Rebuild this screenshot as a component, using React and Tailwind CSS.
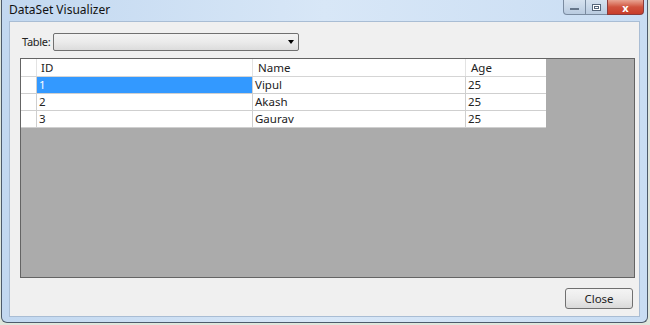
import React from "react";

const rows = [
  { id: "1", name: "Vipul", age: "25" },
  { id: "2", name: "Akash", age: "25" },
  { id: "3", name: "Gaurav", age: "25" },
];

const TitleButtons = () => (
  <div className="flex h-[15px] mr-[3px]">
    <div className="w-[23px] h-full border border-[#7a8ba0] border-t-0 rounded-bl-[4px] bg-gradient-to-b from-[#d6e2ef] to-[#b9cbe0] flex items-center justify-center">
      <div className="w-[9px] h-[2px] bg-white border border-[#66768a] mt-[4px]" />
    </div>
    <div className="w-[21px] h-full border-b border-[#7a8ba0] bg-gradient-to-b from-[#d6e2ef] to-[#b9cbe0] flex items-center justify-center">
      <div className="w-[9px] h-[7px] border border-[#56667a] bg-white flex items-center justify-center">
        <div className="w-[5px] h-[3px] border border-[#56667a]" />
      </div>
    </div>
    <div className="w-[37px] h-full border border-[#8a3b3b] border-t-0 rounded-br-[4px] bg-gradient-to-b from-[#e8a493] via-[#d0523d] to-[#c83c2a] flex items-center justify-center">
      <span className="text-white text-[11px] font-bold leading-none">x</span>
    </div>
  </div>
);

const App = () => {
  return (
    <div
      className="w-[650px] h-[325px] bg-[#dfe6dc] pl-[1px] overflow-hidden"
      style={{ fontFamily: '"Segoe UI", "Noto Sans", "Open Sans", sans-serif' }}
    >
      <div className="w-[647px] h-[323px] border border-[#4d5b6b] border-t-0 rounded-b-[6px] bg-gradient-to-r from-[#c2d8f0] via-[#d8e7f7] to-[#c9ddf3] flex flex-col">
        {/* title bar */}
        <div className="h-[21px] flex justify-between items-start">
          <div className="pl-[7px] pt-[2px] text-[12px] text-[#111] leading-[16px]">
            DataSet Visualizer
          </div>
          <TitleButtons />
        </div>

        {/* client area */}
        <div className="mx-[7px] mb-[5px] flex-1 border border-[#a9bdd4] bg-[#f0f0f0] flex flex-col">
          <div className="flex items-center mt-[11px] h-[18px]">
            <span className="ml-[12px] w-[31px] shrink-0 whitespace-nowrap text-[11px] tracking-[-0.3px] text-[#222]">Table:</span>
            <div className="w-[246px] h-[18px] border border-[#707070] rounded-[2px] bg-gradient-to-b from-[#f3f3f3] via-[#ebebeb] to-[#dcdcdc] flex items-center justify-end pr-[4px]">
              <div className="w-0 h-0 border-l-[3px] border-r-[3px] border-t-[4px] border-l-transparent border-r-transparent border-t-black" />
            </div>
          </div>

          {/* grid */}
          <div className="ml-[10px] mr-[4px] mt-[7px] h-[220px] border border-[#646464] bg-[#ababab] text-[11.5px] text-[#222]">
            <div className="w-[525px] bg-white">
              <div className="flex h-[18px] border-b border-[#d5d5d5]">
                <div className="w-[16px] border-r border-[#e3e3e3]" />
                <div className="w-[216px] pl-[4px] leading-[17px] border-r border-[#e3e3e3]">ID</div>
                <div className="w-[213px] pl-[5px] leading-[17px] border-r border-[#e3e3e3]">Name</div>
                <div className="w-[80px] pl-[5px] leading-[17px]">Age</div>
              </div>
              {rows.map((r, i) => (
                <div key={r.id} className="flex h-[17px] border-b border-[#cfcfcf]">
                  <div className="w-[16px] border-r border-[#cfcfcf]" />
                  <div
                    className={
                      i === 0
                        ? "w-[216px] pl-[2px] leading-[16px] bg-[#3399ff] text-white border-r border-[#cfcfcf]"
                        : "w-[216px] pl-[2px] leading-[16px] border-r border-[#cfcfcf]"
                    }
                  >
                    {r.id}
                  </div>
                  <div className="w-[213px] pl-[2px] leading-[16px] border-r border-[#cfcfcf]">{r.name}</div>
                  <div className="w-[80px] pl-[2px] leading-[16px]">{r.age}</div>
                </div>
              ))}
            </div>
          </div>

          <div className="flex justify-end mt-[10px] mr-[6px]">
            <div className="w-[68px] h-[21px] border border-[#707070] rounded-[3px] bg-gradient-to-b from-[#f4f4f4] via-[#ebebeb] to-[#d9d9d9] flex items-center justify-center text-[11.5px] text-[#222]">
              Close
            </div>
          </div>
        </div>
      </div>
    </div>
  );
};

export default App;
